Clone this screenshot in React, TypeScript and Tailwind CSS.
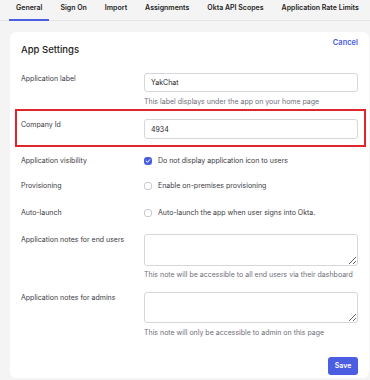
import React from "react"

const tabs = ["General", "Sign On", "Import", "Assignments", "Okta API Scopes", "Application Rate Limits"]

function CheckRow({ label, text, checked }: { label: string; text: string; checked?: boolean }) {
  return (
    <div className="flex items-center h-[10px]">
      <div className="w-[123px] shrink-0 text-[7px] leading-[10px] text-[#3a3a42]">{label}</div>
      {checked ? (
        <div className="w-[8px] h-[8px] rounded-[3px] bg-[#4a5ddf] flex items-center justify-center">
          <svg width="6" height="6" viewBox="0 0 6 6">
            <path d="M1.2 3.1 L2.5 4.3 L4.8 1.7" stroke="white" strokeWidth="1" fill="none" strokeLinecap="round" strokeLinejoin="round" />
          </svg>
        </div>
      ) : (
        <div className="w-[8px] h-[8px] rounded-[3px] border border-[#c9c9cf] bg-white" />
      )}
      <div className="ml-[6px] text-[7px] leading-[10px] text-[#3a3a42]">{text}</div>
    </div>
  )
}

export default function App() {
  return (
    <div className="w-[370px] h-[380px] bg-[#f4f4f5] font-[Inter,sans-serif] overflow-hidden">
      {/* Tabs */}
      <div className="h-[21px] border-b border-[#e3e3e8] flex pl-[9px] gap-[4px]">
        {tabs.map((t, i) => (
          <div
            key={t}
            className={
              i === 0
                ? "px-[7px] pt-[3px] text-[7px] leading-[10px] font-semibold text-[#1d1d21] border-b-2 border-[#4b5de0] -mb-px"
                : "px-[7px] pt-[3px] text-[7px] leading-[10px] font-semibold text-[#1d1d21]"
            }
          >
            {t}
          </div>
        ))}
      </div>

      {/* Card */}
      <div className="mt-[11px] ml-[10px] mr-[1px] h-[346px] bg-white rounded-[6px] px-[11px] flex flex-col">
        <div className="h-[32px] flex justify-between items-start">
          <div className="pt-[12px] text-[9.5px] leading-[12px] font-medium text-[#1d1d21]">App Settings</div>
          <div className="pt-[6px] text-[7.5px] leading-[10px] font-semibold text-[#4b5de0]">Cancel</div>
        </div>

        {/* Application label */}
        <div className="mt-[9px] flex">
          <div className="w-[123px] shrink-0 pt-[1px] text-[7px] leading-[10px] text-[#3a3a42]">Application label</div>
          <div className="flex-1 flex flex-col">
            <input
              readOnly
              value="YakChat"
              className="h-[19px] w-full border border-[#d6d6db] rounded-[3px] px-[6px] text-[7px] text-[#1d1d21] outline-none"
            />
            <div className="mt-[5px] text-[7px] leading-[10px] text-[#6e6e78]">This label displays under the app on your home page</div>
          </div>
        </div>

        {/* Company Id (highlighted) */}
        <div className="mt-[2px] ml-[-6px] mr-[-8px] border-2 border-[#e0262b] pl-[4px] pr-[6px] pt-[8px] pb-[6px] flex">
          <div className="w-[123px] shrink-0 pt-[1px] text-[7px] leading-[10px] text-[#3a3a42]">Company Id</div>
          <input
            readOnly
            value="4934"
            className="flex-1 min-w-0 h-[20px] border border-[#d6d6db] rounded-[3px] px-[6px] text-[7px] text-[#1d1d21] outline-none"
          />
        </div>

        <div className="mt-[9px]">
          <CheckRow label="Application visibility" text="Do not display application icon to users" checked />
        </div>
        <div className="mt-[15px]">
          <CheckRow label="Provisioning" text="Enable on-premises provisioning" />
        </div>
        <div className="mt-[17px]">
          <CheckRow label="Auto-launch" text="Auto-launch the app when user signs into Okta." />
        </div>

        {/* Notes for end users */}
        <div className="mt-[16px] flex">
          <div className="w-[123px] shrink-0 pt-[1px] text-[7px] leading-[10px] text-[#3a3a42]">Application notes for end users</div>
          <div className="flex-1 flex flex-col">
            <textarea readOnly className="h-[32px] w-full border border-[#d6d6db] rounded-[3px] outline-none" />
            <div className="mt-[4px] text-[7px] leading-[10px] text-[#6e6e78]">This note will be accessible to all end users via their dashboard</div>
          </div>
        </div>

        {/* Notes for admins */}
        <div className="mt-[12px] flex">
          <div className="w-[123px] shrink-0 pt-[1px] text-[7px] leading-[10px] text-[#3a3a42]">Application notes for admins</div>
          <div className="flex-1 flex flex-col">
            <textarea readOnly className="h-[31px] w-full border border-[#d6d6db] rounded-[3px] outline-none" />
            <div className="mt-[5px] text-[7px] leading-[10px] text-[#6e6e78]">This note will only be accessible to admin on this page</div>
          </div>
        </div>

        <div className="mt-[19px] flex justify-end">
          <button className="h-[18px] w-[30px] rounded-[3px] bg-[#4b5de0] text-white text-[7px] font-semibold">Save</button>
        </div>
      </div>
    </div>
  )
}
